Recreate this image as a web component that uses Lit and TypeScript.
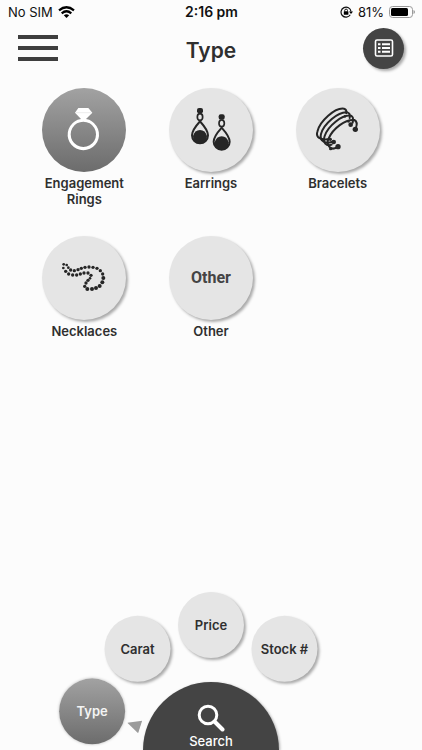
import { LitElement, html, svg, css, TemplateResult } from "lit";
import { customElement, state } from "lit/decorators.js";
import { classMap } from "lit/directives/class-map.js";
import { styleMap } from "lit/directives/style-map.js";

interface Category {
  id: string;
  label: string;
  art: () => TemplateResult;
}

const earring = (x: number, y: number) => svg`
  <g transform="translate(${x} ${y})">
    <rect x="-9" y="0" width="18" height="16" rx="6" fill="#262626"/>
    <ellipse cx="0" cy="27" rx="8" ry="10" fill="none" stroke="#262626" stroke-width="5"/>
    <path d="M0 40C-9 50-24 66-24 82A24 24 0 0 0 24 82C24 66 9 50 0 40Z" fill="none" stroke="#262626" stroke-width="6"/>
    <path d="M-21 84Q-16 66 0 66Q16 66 21 84Q22 105 0 107Q-22 105-21 84Z" fill="#262626"/>
  </g>`;

const ringArt = () => html`
  <svg class="art" viewBox="39 24 252 252" aria-hidden="true">
    <path fill="#fff" d="M148 84H178L190 98L171 117Q182 118 188 124A47 47 0 1 1 138 124Q145 118 156 117L138 98ZM163 125A38 38 0 1 0 163.100 125Z" fill-rule="evenodd"/>
    <path d="M141 98H187" stroke="#e4e4e4" stroke-width="2"/>
  </svg>`;

const earringsArt = () => html`
  <svg class="art" viewBox="27 24 252 252" aria-hidden="true">
    ${earring(120, 84)}${earring(185, 103)}
  </svg>`;

const braceletsArt = () => html`
  <svg class="art" viewBox="33 24 252 252" aria-hidden="true">
    <g fill="none" stroke="#262626" stroke-width="6" stroke-linecap="round">
      <path d="M128 178C106 180 92 172 97 155C104 124 150 82 177 86Q186 89 184 100"/>
      <path d="M140 186C122 192 102 184 108 162C116 132 160 94 187 97Q197 100 194 114"/>
      <path d="M140 194C124 200 112 188 119 168C129 138 170 104 198 107Q207 111 203 128"/>
      <path d="M156 202C136 214 122 194 131 175C144 146 181 117 208 120Q220 126 212 146"/>
    </g>
    <g fill="#262626">
      <circle cx="146" cy="186" r="7"/><circle cx="159" cy="200" r="8"/>
      <circle cx="197" cy="134" r="7"/><circle cx="211" cy="148" r="8"/>
      <circle cx="136" cy="178" r="5"/><circle cx="137" cy="206" r="5"/>
      <circle cx="180" cy="109" r="4"/><circle cx="190" cy="124" r="4"/>
    </g>
  </svg>`;

const beads: [number, number, number][] = [
  [104, 109, 4], [113, 111, 4], [103, 120, 4], [118, 119, 4], [110, 130, 5],
  [125, 126, 5], [119, 138, 5], [136, 128, 5], [131, 141, 5], [147, 125, 5],
  [143, 141, 5], [157, 121, 5], [154, 138, 5], [168, 118, 5], [165, 135, 5],
  [180, 117, 5], [177, 135, 5], [192, 118, 5], [186, 142, 5], [204, 121, 5],
  [183, 151, 4], [214, 128, 5], [177, 157, 5], [221, 138, 5], [171, 165, 5],
  [223, 150, 6], [167, 175, 5], [220, 163, 6], [175, 183, 6], [212, 174, 6],
  [189, 183, 6], [201, 180, 6],
];

const necklacesArt = () => html`
  <svg class="art" viewBox="39 24 252 252" aria-hidden="true">
    ${beads.map(([x, y, r]) => svg`<circle cx=${x} cy=${y} r=${r} fill="#262626"/>`)}
  </svg>`;

const categories: Category[] = [
  { id: "rings", label: "Engagement Rings", art: ringArt },
  { id: "earrings", label: "Earrings", art: earringsArt },
  { id: "bracelets", label: "Bracelets", art: braceletsArt },
  { id: "necklaces", label: "Necklaces", art: necklacesArt },
  { id: "other", label: "Other", art: () => html`<span class="word">Other</span>` },
];

const filters = [
  { label: "Type", angle: -72 },
  { label: "Carat", angle: -36 },
  { label: "Price", angle: 0 },
  { label: "Stock #", angle: 36 },
];

@customElement("status-bar")
export class StatusBar extends LitElement {
  static styles = css`
    :host {
      display: grid;
      grid-template-columns: 1fr auto 1fr;
      align-items: center;
      height: 24px;
      padding: 0 7px 0 8px;
      font: 400 13px/16px Inter, "Liberation Sans", sans-serif;
      color: #111;
    }
    .side { display: flex; align-items: center; gap: 5px; }
    .end { justify-content: flex-end; }
    .time { font-size: 14px; font-weight: 600; }
    svg { display: block; }
  `;

  render() {
    return html`
      <div class="side">
        <span>No SIM</span>
        <svg width="17" height="12" viewBox="0 0 17 12" aria-hidden="true">
          <g fill="none" stroke="#000" stroke-width="2.200">
            <path d="M1 4.300Q8.500-1.800 16 4.300"/>
            <path d="M3.700 7.300Q8.500 3.200 13.300 7.300"/>
          </g>
          <path d="M5.800 9.200Q8.500 7.200 11.200 9.200L8.500 12Z"/>
        </svg>
      </div>
      <span class="time">2:16 pm</span>
      <div class="side end">
        <svg width="13" height="12" viewBox="0 0 13 12" aria-hidden="true">
          <path d="M10.300 8.800A5 5 0 1 1 11 5.500" fill="none" stroke="#111" stroke-width="1.200"/>
          <path d="M9 5.500H13L11 8Z"/>
          <rect x="3.800" y="5.300" width="4.600" height="3.500" rx=".5"/>
          <path d="M4.700 5.500V4.500A1.400 1.400 0 0 1 7.500 4.500V5.500" fill="none" stroke="#111"/>
        </svg>
        <span>81%</span>
        <svg width="26" height="12" viewBox="0 0 26 12" aria-hidden="true">
          <rect x=".5" y=".5" width="23" height="11" rx="3" fill="none" stroke="#999"/>
          <rect x="2" y="2" width="17" height="8" rx="1.500"/>
          <path d="M24.500 4V8Q26 7.500 26 6T24.500 4Z" fill="#999"/>
        </svg>
      </div>`;
  }
}

@customElement("app-root")
export class AppRoot extends LitElement {
  @state() private category = "rings";
  @state() private filter = "Type";

  static styles = css`
    :host {
      display: flex;
      flex-direction: column;
      min-height: 100vh;
      background: #fcfcfc;
      color: #2f2f2f;
      font-family: Inter, "Liberation Sans", sans-serif;
    }
    button {
      margin: 0;
      padding: 0;
      border: 0;
      background: none;
      color: inherit;
      font: inherit;
      cursor: pointer;
    }
    svg { display: block; }
    header {
      display: grid;
      grid-template-columns: 1fr auto 1fr;
      align-items: center;
      height: 48px;
      padding: 0 18px;
    }
    .menu { display: grid; gap: 7px; width: 40px; }
    .bar { height: 4px; background: #3e3e3e; }
    h1 { margin: 6px 0 0; font-size: 21px; line-height: 28px; font-weight: 600; }
    .list {
      display: grid;
      place-items: center;
      justify-self: end;
      width: 41px;
      height: 41px;
      border-radius: 50%;
      background: #444;
      box-shadow: 2px 2px 3px #0005;
    }
    main {
      display: grid;
      grid-template-columns: repeat(3, 1fr);
      gap: 28px 0;
      padding: 16px 21px;
    }
    .category {
      display: flex;
      flex-direction: column;
      align-items: center;
      gap: 3px;
      min-height: 120px;
      font-size: 13px;
      line-height: 16px;
      font-weight: 600;
    }
    .disc {
      display: grid;
      place-items: center;
      width: 84px;
      height: 84px;
      border-radius: 50%;
      background: #e5e5e5;
      box-shadow: 2px 2px 3px #0005;
    }
    .art { width: 84px; height: 84px; }
    .word { font: 700 16px/20px Roboto, sans-serif; color: #444; }
    .caption { max-width: 100px; }
    .on .disc, .filter.on {
      background: linear-gradient(#a2a2a2, #6c6c6c);
      box-shadow: none;
    }
    .dial {
      display: grid;
      justify-items: center;
      align-items: end;
      height: 166px;
      margin-top: auto;
      overflow: hidden;
    }
    .dial > * { grid-area: 1 / 1; }
    .filter {
      width: 66px;
      height: 66px;
      margin-bottom: -33px;
      border-radius: 50%;
      background: #e5e5e5;
      box-shadow: 2px 2px 3px #0005;
      font-size: 13px;
      line-height: 16px;
      font-weight: 600;
    }
    .filter.on { color: #f4f4f4; box-shadow: 0 0 3px #0004; }
    .pointer { width: 14px; height: 14px; margin-bottom: -7px; }
    .search {
      display: flex;
      flex-direction: column;
      align-items: center;
      gap: 1px;
      width: 136px;
      height: 68px;
      padding-top: 22px;
      box-sizing: border-box;
      border-radius: 68px 68px 0 0;
      background: #444;
      box-shadow: 1px 1px 3px #0005;
      color: #fff;
      font-size: 13px;
      line-height: 16px;
      font-weight: 500;
    }
  `;

  private orbit(angle: number, radius: number, upright = true) {
    return styleMap({
      transform: `rotate(${angle}deg) translateY(${-radius}px) rotate(${upright ? -angle : 0}deg)`,
    });
  }

  render() {
    const active = filters.find((f) => f.label === this.filter)!;
    return html`
      <status-bar></status-bar>
      <header>
        <button class="menu" aria-label="Menu">
          <span class="bar"></span><span class="bar"></span><span class="bar"></span>
        </button>
        <h1>${this.filter}</h1>
        <button class="list" aria-label="List">
          <svg width="20" height="20" viewBox="0 0 20 20" fill="none" stroke="#fff" aria-hidden="true">
            <rect x="1.500" y="2" width="17" height="16" rx="1.500" stroke-width="1.600"/>
            <path d="M4 6.200H6.500M4 10H6.500M4 13.800H6.500M8 6.200H16M8 10H16M8 13.800H16" stroke-width="2"/>
          </svg>
        </button>
      </header>
      <main>
        ${categories.map(
          (c) => html`
            <button
              class=${classMap({ category: true, on: c.id === this.category })}
              aria-pressed=${c.id === this.category}
              @click=${() => (this.category = c.id)}
            >
              <span class="disc">${c.art()}</span>
              <span class="caption">${c.label}</span>
            </button>`
        )}
      </main>
      <nav class="dial" aria-label="Filters">
        ${filters.map(
          (f) => html`
            <button
              class=${classMap({ filter: true, on: f.label === this.filter })}
              style=${this.orbit(f.angle, 125)}
              @click=${() => (this.filter = f.label)}
            >${f.label}</button>`
        )}
        <svg class="pointer" style=${this.orbit(active.angle, 81, false)} viewBox="0 0 14 14" aria-hidden="true">
          <path d="M7 0L13.500 13.500H.5Z" fill="#9b9b9b"/>
        </svg>
        <button class="search">
          <svg width="28" height="28" viewBox="0 0 28 28" fill="none" stroke="#fff" aria-hidden="true">
            <circle cx="11" cy="11" r="8.800" stroke-width="3"/>
            <path d="M17.500 17.500L25.500 25.500" stroke-width="4" stroke-linecap="round"/>
          </svg>
          <span>Search</span>
        </button>
      </nav>`;
  }
}
